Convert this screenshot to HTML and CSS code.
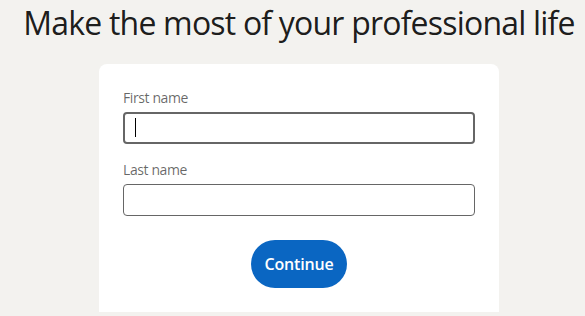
FILE: index.html
```html
<!DOCTYPE html>
<html lang="en">
<head>
    <meta charset="UTF-8">
    <meta name="viewport" content="width=device-width, initial-scale=1.0">
    <title>Join</title>
    <link rel="stylesheet" href="styles.css">
</head>
<body>

<div class="page">
    <h1 class="title">Make the most of your professional life</h1>

    <form class="join-card">
        <label class="field-label" for="first-name">First name</label>
        <div class="field-wrap">
            <input class="field focused" id="first-name" type="text">
            <span class="caret"></span>
        </div>

        <label class="field-label" for="last-name">Last name</label>
        <div class="field-wrap">
            <input class="field" id="last-name" type="text">
        </div>

        <div class="actions">
            <button type="button" class="btn-continue">Continue</button>
        </div>
    </form>
</div>

</body>
</html>
```

FILE: styles.css
```css
html, body {
    margin: 0;
    padding: 0;
    overflow: hidden;
}
body {
    font-family: "Open Sans", "Noto Sans", Arial, sans-serif;
    background-color: #f3f2ef;
    color: rgba(0, 0, 0, 0.9);
}
.page {
    width: 598px;
}
.title {
    margin: 0;
    padding-top: 3px;
    font-size: 32px;
    font-weight: 400;
    line-height: 40px;
    letter-spacing: -0.8px;
    text-align: center;
    color: rgba(0, 0, 0, 0.9);
}
.join-card {
    width: 352px;
    margin: 21px auto 0;
    padding: 24px;
    background-color: white;
    border-radius: 8px 8px 0 0;
    display: flex;
    flex-direction: column;
}
.field-label {
    font-size: 14px;
    line-height: 20px;
    letter-spacing: -0.4px;
    color: rgba(0, 0, 0, 0.6);
}
.field-wrap {
    position: relative;
    margin-top: 4px;
    margin-bottom: 16px;
}
.field {
    display: block;
    box-sizing: border-box;
    width: 100%;
    height: 32px;
    margin: 0;
    padding: 0 12px;
    border: 1px solid #666;
    border-radius: 4px;
    background: white;
    font: inherit;
    outline: none;
}
.field.focused {
    border-width: 2px;
}
.caret {
    position: absolute;
    left: 12px;
    top: 6px;
    width: 1px;
    height: 19px;
    background-color: black;
}
.actions {
    display: flex;
    justify-content: center;
    margin-top: 8px;
}
.btn-continue {
    height: 48px;
    padding: 0 14px;
    border: none;
    border-radius: 24px;
    background-color: #0a66c2;
    color: white;
    font-family: inherit;
    font-size: 16px;
    font-weight: 600;
    letter-spacing: -0.2px;
    cursor: pointer;
}
```
